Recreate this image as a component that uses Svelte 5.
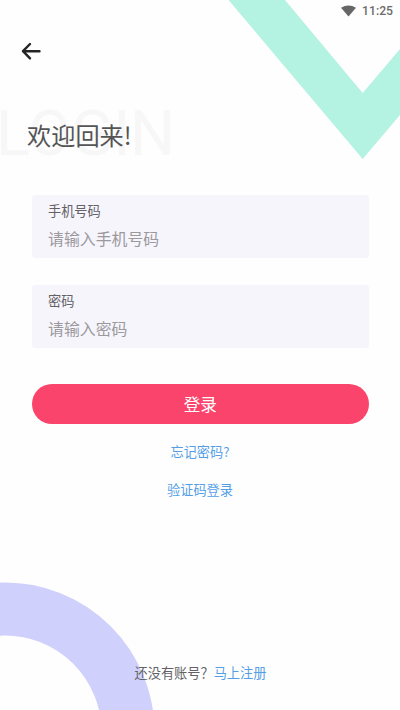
<script>
	let phone = "";
	let password = "";
</script>

<style>
	:global(body) {
		margin: 0;
		background: #fefefe;
	}

	.page {
		position: relative;
		display: flex;
		flex-direction: column;
		box-sizing: border-box;
		width: 400px;
		height: 710px;
		overflow: hidden;
		background: #fefefe;
		color: #626266;
		font-family: "Noto Sans CJK SC", sans-serif;
		font-size: 13.2px;
	}

	.shapes {
		position: absolute;
		top: 0;
		left: 0;
		pointer-events: none;
	}

	.status {
		position: relative;
		display: flex;
		justify-content: flex-end;
		align-items: center;
		gap: 6px;
		height: 22px;
		padding-right: 7px;
		box-sizing: border-box;
		color: #6c6c6c;
		font-family: Roboto, sans-serif;
		font-size: 12.2px;
		font-weight: 500;
	}

	.status svg {
		display: block;
		margin-top: -1px;
	}

	.back {
		display: block;
		width: 22px;
		height: 20px;
		margin: 19px 0 0 20px;
		padding: 0;
		border: none;
		background: none;
	}

	.back svg {
		display: block;
	}

	.heading {
		position: relative;
		height: 40px;
		margin: 54px 0 0 27px;
	}

	.watermark {
		position: absolute;
		top: -18px;
		left: -31px;
		color: #f7f7f7;
		font-family: Roboto, sans-serif;
		font-size: 63px;
		line-height: 74px;
		letter-spacing: -0.3px;
	}

	h1 {
		position: relative;
		margin: 0;
		color: #555;
		font-size: 24.2px;
		font-weight: 400;
		line-height: 40px;
	}

	form {
		display: flex;
		flex-direction: column;
		margin: 40px 31.5px 0 32px;
	}

	.field {
		display: flex;
		flex-direction: column;
		box-sizing: border-box;
		height: 63px;
		margin-bottom: 27px;
		padding: 6px 16px 0;
		border-radius: 3px;
		background: #f7f5fc;
		line-height: 20px;
	}

	input {
		height: 26px;
		margin-top: 4px;
		padding: 0;
		border: none;
		outline: none;
		background: none;
		color: #626266;
		font-family: inherit;
		font-size: 15.9px;
	}

	input::placeholder {
		color: #9b999c;
		opacity: 1;
	}

	.submit {
		height: 40px;
		margin: 9px 0 0;
		padding: 1px 0 0;
		border: none;
		border-radius: 20px;
		background: #fb446c;
		color: #fff;
		font-family: inherit;
		font-size: 16.6px;
		line-height: 39px;
	}

	.links {
		display: flex;
		flex-direction: column;
		align-items: center;
		gap: 18px;
		margin-top: 18px;
		line-height: 20px;
	}

	a {
		color: #559ee6;
		text-decoration: none;
	}

	.register {
		position: relative;
		margin: auto 0 27px;
		padding-left: 1px;
		line-height: 20px;
		text-align: center;
	}
</style>

<div class="page">
	<svg class="shapes" width="400" height="710" viewBox="0 0 400 710">
		<path d="M228.5 0H285L362.7 93 400 49v66l-37.3 44z" fill="#b4f3e2" />
		<circle cx="5" cy="732" r="123" fill="none" stroke="#d0d0fd" stroke-width="53" />
	</svg>

	<div class="status">
		<svg width="15" height="12" viewBox="0 0 15 12">
			<path d="M0 2.7Q7.5-1.9 15 2.7L7.5 11.6z" fill="#666" />
		</svg>
		<span>11:25</span>
	</div>

	<button class="back" aria-label="返回">
		<svg width="22" height="20" viewBox="0 0 22 20" fill="none" stroke="#242424" stroke-width="2.4" stroke-linecap="round" stroke-linejoin="round">
			<path d="M19.5 10.2H3M10 3L3 10.2l7 7.2" />
		</svg>
	</button>

	<div class="heading">
		<div class="watermark" aria-hidden="true">LOGIN</div>
		<h1>欢迎回来!</h1>
	</div>

	<form on:submit|preventDefault>
		<div class="field">
			<label for="phone">手机号码</label>
			<input id="phone" type="text" placeholder="请输入手机号码" bind:value={phone} />
		</div>
		<div class="field">
			<label for="password">密码</label>
			<input id="password" type="password" placeholder="请输入密码" bind:value={password} />
		</div>
		<button class="submit">登录</button>
	</form>

	<div class="links">
		<a href="#forgot">忘记密码?</a>
		<a href="#code">验证码登录</a>
	</div>

	<div class="register">还没有账号？<a href="#register">马上注册</a></div>
</div>
